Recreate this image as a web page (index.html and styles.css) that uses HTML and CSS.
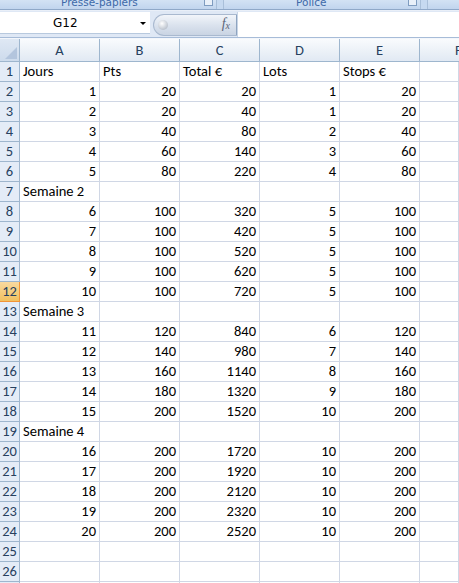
FILE: index.html
```html
<!DOCTYPE html>
<html lang="fr">
<head>
<meta charset="utf-8">
<title>Feuille</title>
<link rel="stylesheet" href="styles.css">
</head>
<body>
<div class="ribbon">
  <div class="grp g1"><span class="glabel">Presse-papiers</span><span class="launch"></span></div>
  <div class="grp g2"><span class="glabel">Police</span><span class="launch"></span></div>
  <div class="grp g3"></div>
</div>
<div class="fbar">
  <div class="namebox"><span class="ref">G12</span><span class="arrow"></span></div>
  <div class="fxbtn"><span class="dot"></span><span class="fx">f<sub>x</sub></span></div>
  <div class="finput"></div>
</div>
<div class="sheet">
  <div class="corner"><span class="tri"></span></div>
  <div class="ch">A</div><div class="ch">B</div><div class="ch">C</div><div class="ch">D</div><div class="ch">E</div><div class="ch last">F</div>

  <div class="rh">1</div><div class="c t">Jours</div><div class="c t">Pts</div><div class="c t">Total €</div><div class="c t">Lots</div><div class="c t">Stops €</div><div class="c"></div>
  <div class="rh">2</div><div class="c">1</div><div class="c">20</div><div class="c">20</div><div class="c">1</div><div class="c">20</div><div class="c"></div>
  <div class="rh">3</div><div class="c">2</div><div class="c">20</div><div class="c">40</div><div class="c">1</div><div class="c">20</div><div class="c"></div>
  <div class="rh">4</div><div class="c">3</div><div class="c">40</div><div class="c">80</div><div class="c">2</div><div class="c">40</div><div class="c"></div>
  <div class="rh">5</div><div class="c">4</div><div class="c">60</div><div class="c">140</div><div class="c">3</div><div class="c">60</div><div class="c"></div>
  <div class="rh">6</div><div class="c">5</div><div class="c">80</div><div class="c">220</div><div class="c">4</div><div class="c">80</div><div class="c"></div>
  <div class="rh">7</div><div class="c t ov">Semaine 2</div><div class="c"></div><div class="c"></div><div class="c"></div><div class="c"></div><div class="c"></div>
  <div class="rh">8</div><div class="c">6</div><div class="c">100</div><div class="c">320</div><div class="c">5</div><div class="c">100</div><div class="c"></div>
  <div class="rh">9</div><div class="c">7</div><div class="c">100</div><div class="c">420</div><div class="c">5</div><div class="c">100</div><div class="c"></div>
  <div class="rh">10</div><div class="c">8</div><div class="c">100</div><div class="c">520</div><div class="c">5</div><div class="c">100</div><div class="c"></div>
  <div class="rh">11</div><div class="c">9</div><div class="c">100</div><div class="c">620</div><div class="c">5</div><div class="c">100</div><div class="c"></div>
  <div class="rh sel">12</div><div class="c">10</div><div class="c">100</div><div class="c">720</div><div class="c">5</div><div class="c">100</div><div class="c"></div>
  <div class="rh">13</div><div class="c t ov">Semaine 3</div><div class="c"></div><div class="c"></div><div class="c"></div><div class="c"></div><div class="c"></div>
  <div class="rh">14</div><div class="c">11</div><div class="c">120</div><div class="c">840</div><div class="c">6</div><div class="c">120</div><div class="c"></div>
  <div class="rh">15</div><div class="c">12</div><div class="c">140</div><div class="c">980</div><div class="c">7</div><div class="c">140</div><div class="c"></div>
  <div class="rh">16</div><div class="c">13</div><div class="c">160</div><div class="c">1140</div><div class="c">8</div><div class="c">160</div><div class="c"></div>
  <div class="rh">17</div><div class="c">14</div><div class="c">180</div><div class="c">1320</div><div class="c">9</div><div class="c">180</div><div class="c"></div>
  <div class="rh">18</div><div class="c">15</div><div class="c">200</div><div class="c">1520</div><div class="c">10</div><div class="c">200</div><div class="c"></div>
  <div class="rh">19</div><div class="c t ov">Semaine 4</div><div class="c"></div><div class="c"></div><div class="c"></div><div class="c"></div><div class="c"></div>
  <div class="rh">20</div><div class="c">16</div><div class="c">200</div><div class="c">1720</div><div class="c">10</div><div class="c">200</div><div class="c"></div>
  <div class="rh">21</div><div class="c">17</div><div class="c">200</div><div class="c">1920</div><div class="c">10</div><div class="c">200</div><div class="c"></div>
  <div class="rh">22</div><div class="c">18</div><div class="c">200</div><div class="c">2120</div><div class="c">10</div><div class="c">200</div><div class="c"></div>
  <div class="rh">23</div><div class="c">19</div><div class="c">200</div><div class="c">2320</div><div class="c">10</div><div class="c">200</div><div class="c"></div>
  <div class="rh">24</div><div class="c">20</div><div class="c">200</div><div class="c">2520</div><div class="c">10</div><div class="c">200</div><div class="c"></div>
  <div class="rh">25</div><div class="c"></div><div class="c"></div><div class="c"></div><div class="c"></div><div class="c"></div><div class="c"></div>
  <div class="rh">26</div><div class="c"></div><div class="c"></div><div class="c"></div><div class="c"></div><div class="c"></div><div class="c"></div>
  <div class="rh">27</div><div class="c"></div><div class="c"></div><div class="c"></div><div class="c"></div><div class="c"></div><div class="c"></div>
</div>
</body>
</html>
```

FILE: styles.css
```css
html, body {
  margin: 0;
  padding: 0;
  background: #ffffff;
  overflow: hidden;
  width: 459px;
  height: 583px;
}
body {
  font-family: "Carlito", "Lato", "Liberation Sans", sans-serif;
}

/* ribbon strip */
.ribbon {
  display: flex;
  height: 9px;
  background: #c6d9f0;
  border-bottom: 1px solid #8fa8c8;
  overflow: hidden;
}
.grp {
  position: relative;
  height: 9px;
  background: linear-gradient(#d3e2f4, #c1d5ee);
  overflow: hidden;
}
.g1 { width: 216px; border-right: 1px solid #a9bfd9; }
.g2 { width: 196px; margin-left: 6px; border-left: 1px solid #a9bfd9; border-right: 1px solid #a9bfd9; }
.g3 { flex: 1; margin-left: 6px; border-left: 1px solid #a9bfd9; }
.glabel {
  position: absolute;
  top: -4px;
  font-family: "DejaVu Sans", "Liberation Sans", sans-serif;
  font-size: 10.5px;
  line-height: 13px;
  color: #3d69a8;
  white-space: nowrap;
}
.g1 .glabel { left: 61px; }
.g2 .glabel { left: 72px; }
.launch {
  position: absolute;
  top: 0;
  width: 7px;
  height: 5px;
  border: 1px solid #7f9cc0;
  border-top: none;
  background: #e9f0f9;
}
.g1 .launch { right: 3px; }
.g2 .launch { right: 3px; }

/* formula bar */
.fbar {
  display: flex;
  height: 26px;
  background: #dfe8f5;
  border-top: 1px solid #e9eff8;
  border-bottom: 1px solid #a7bcd8;
  align-items: stretch;
}
.namebox {
  width: 150px;
  margin-top: 1px;
  margin-bottom: 3px;
  background: #ffffff;
  display: flex;
  align-items: center;
  position: relative;
  border-bottom: 1px solid #b8c9de;
}
.ref {
  margin-left: 53px;
  font-family: "DejaVu Sans", "Liberation Sans", sans-serif;
  font-size: 12px;
  color: #000;
}
.arrow {
  position: absolute;
  left: 140px;
  top: 10px;
  width: 0;
  height: 0;
  border-left: 3px solid transparent;
  border-right: 3px solid transparent;
  border-top: 3px solid #000;
}
.fxbtn {
  width: 82px;
  margin-left: 3px;
  margin-top: 3px;
  margin-bottom: 1px;
  border-radius: 11px 0 0 11px;
  background: linear-gradient(#f2f5fa, #dbe3ee 50%, #c9d4e3);
  border: 1px solid #a9b9cf;
  border-right: 1px solid #8ea4c0;
  position: relative;
}
.dot {
  position: absolute;
  left: 4px;
  top: 5px;
  width: 10px;
  height: 10px;
  border-radius: 50%;
  background: radial-gradient(circle at 40% 35%, #ffffff, #c7cdd6 60%, #a2abb8);
}
.fx {
  position: absolute;
  right: 6px;
  top: 1px;
  font-family: "Liberation Serif", serif;
  font-style: italic;
  font-size: 14px;
  color: #5b6678;
}
.fx sub { font-size: 10px; vertical-align: -1px; }
.finput {
  flex: 1;
  background: #ffffff;
  margin-top: 1px;
  border-left: 1px solid #c8d5e6;
}

/* sheet */
.sheet {
  display: grid;
  grid-template-columns: 20px repeat(5, 80px) 1fr;
  grid-template-rows: 23px;
  grid-auto-rows: 20px;
  border-top: 1px solid #f3f6fb;
}
.corner {
  box-sizing: border-box;
  background: linear-gradient(#dfe8f4, #cddbec);
  border-right: 1px solid #9eb6ce;
  border-bottom: 1px solid #9eb6ce;
  position: relative;
}
.tri {
  position: absolute;
  right: 2px;
  bottom: 2px;
  width: 0;
  height: 0;
  border-left: 12px solid transparent;
  border-bottom: 12px solid #b3c5dd;
}
.ch {
  box-sizing: border-box;
  background: linear-gradient(#f9fbfd, #edf2f8 50%, #e1e9f3);
  border-right: 1px solid #9eb6ce;
  border-bottom: 1px solid #9eb6ce;
  text-align: center;
  font-size: 14.5px;
  line-height: 22px;
  color: #27415f;
  overflow: hidden;
}
.ch.last { border-right: none; text-align: left; padding-left: 35px; }
.rh {
  box-sizing: border-box;
  background: #e4ecf7;
  border-right: 1px solid #9eb6ce;
  border-bottom: 1px solid #9eb6ce;
  text-align: center;
  font-size: 14.5px;
  line-height: 19px;
  color: #27415f;
}
.rh.sel {
  background: linear-gradient(#f9d99f, #f1c15f);
  border-right-color: #f29436;
  border-bottom-color: #f29436;
  color: #27415f;
}
.c {
  box-sizing: border-box;
  border-right: 1px solid #d0d7e5;
  border-bottom: 1px solid #d0d7e5;
  text-align: right;
  padding: 0 3px 0 2px;
  font-size: 14.5px;
  line-height: 19px;
  color: #000;
  white-space: nowrap;
}
.c.t { text-align: left; padding-left: 3px; }
.c.ov { overflow: visible; }
```
